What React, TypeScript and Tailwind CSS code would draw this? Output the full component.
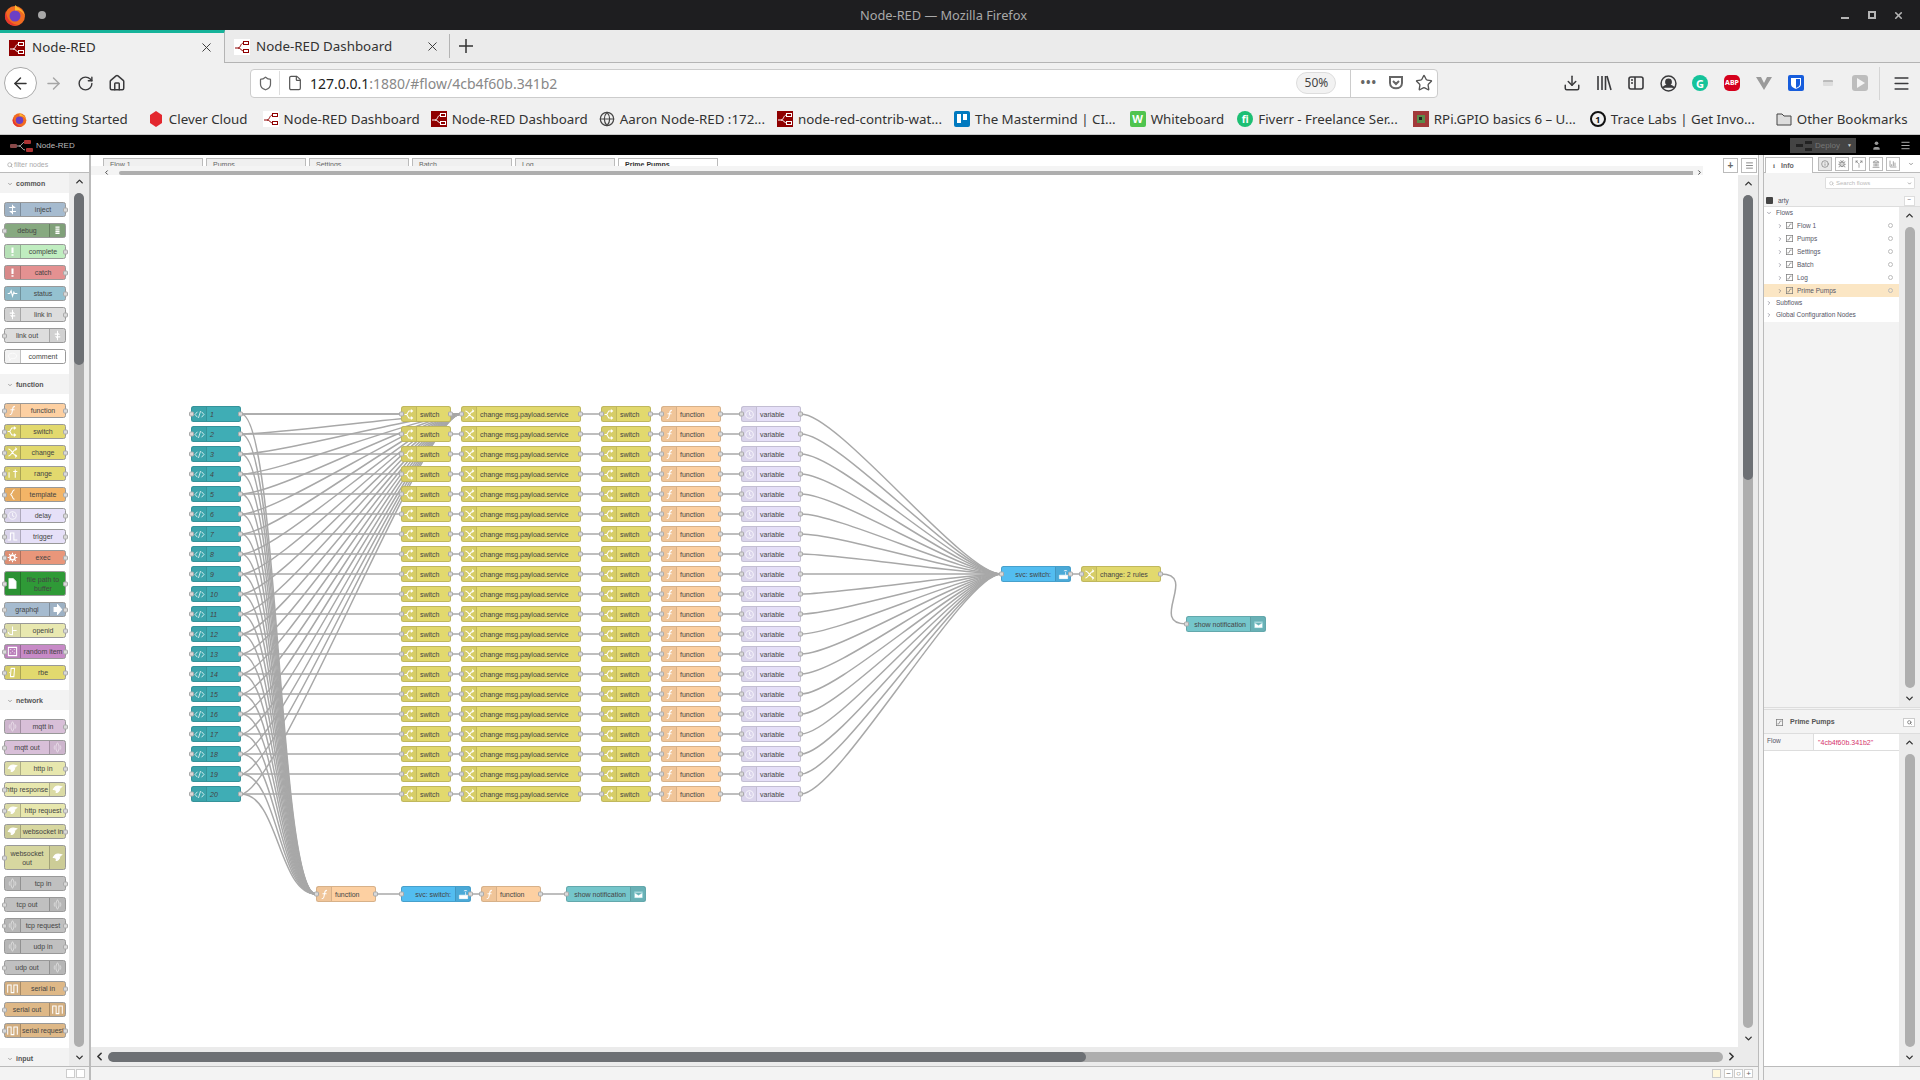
import type { ReactNode } from "react";
import {
  ArrowLeft,
  ArrowRight,
  Bug,
  ChartColumn,
  ChevronDown,
  ChevronLeft,
  ChevronRight,
  ChevronUp,
  Download,
  File,
  Globe,
  House,
  Info,
  Landmark,
  Menu,
  RotateCw,
  Search,
  Shield,
  Split,
  Star,
  User,
  X,
} from "lucide-react";

const ICON_PATHS: Record<string, ReactNode> = {
  switch: <path d="M1 8h3l3-5h5M4 8l3 5h5M10 1l2.500 2L10 5M10 11l2.500 2-2.500 2" fill="none" />,
  change: <path d="M2 3c5 0 7 10 12 10M2 13c5 0 7-10 12-10M12 1l2 2-2 2M12 11l2 2-2 2" fill="none" />,
  function: <path d="M11.500 2c-3 0-3 2-3.500 5l-1 5c-.4 2-1.500 2-3 2M5 7h6" fill="none" />,
  code: <path d="M5 4 1.500 8 5 12M11 4l3.500 4L11 12M9.500 3 6.500 13" fill="none" strokeWidth="1.100" />,
  clock: (
    <g fill="none" opacity="0.75">
      <circle cx="8" cy="8" r="5.500" />
      <path d="M8 4.500V8l2.500 2" />
    </g>
  ),
  mail: <path d="M2 4h12v9H2zM2 5l6 4 6-4" fill="#fff" stroke="#75c6cb" strokeWidth="0.8" />,
  router: <path d="M2 9h12v5H2zM11 9V4M8.500 3c1.500-1 3.500-1 5 0" fill="#fff" stroke="#fff" strokeWidth="1" />,
  inject: <path d="M8 1v14M3 5h8l-2-2M13 11H5l2 2" fill="none" />,
  debug: <path d="M5 3h6M5 6h6M5 9h6M5 12h6" fill="none" strokeWidth="2" />,
  bang: <path d="M8 2v8M8 12v2" fill="none" strokeWidth="3" />,
  status: <path d="M1 8h3l2-4 2 8 2-6 1 2h4" fill="none" />,
  link: <path d="M8 1v14M4 6h6l-2-2M12 10H6l2 2" fill="none" />,
  comment: <path d="M2 7c0-5 12-5 12 0s-7 4-8 4l-2 3v-4C3 10 2 9 2 7z" fill="none" strokeWidth="1" />,
  range: <path d="M3 6v8M3 2v1M12 2v12M9 5h6" fill="none" />,
  template: <path d="M11 1C7 1 9 7 5 8c4 1 2 7 6 7" fill="none" />,
  trigger: <path d="M1 13h4V3h5v10h5" fill="none" />,
  exec: (
    <g fill="none" strokeWidth="2.500">
      <circle cx="8" cy="8" r="3.500" />
      <path d="M8 1v2M8 13v2M1 8h2M13 8h2M3 3l1.500 1.500M13 13l-1.500-1.500M13 3l-1.500 1.500M3 13l1.500-1.500" strokeWidth="1.500" />
    </g>
  ),
  file: <path d="M3 1h6l4 4v10H3z" fill="#fff" />,
  arrow: <path d="M3 5h5V1l6 7-6 7v-4H3z" fill="#fff" />,
  openid: <path d="M8 2v12c-3 0-6-1-6-4M8 8h6" fill="none" />,
  dice: <path d="M2 2h12v12H2zM5 5h1M10 5h1M5 10h1M10 10h1M7.500 7.500h1" fill="none" />,
  rbe: <path d="M6 2h5l-1 12H5zM3 8h1" fill="none" />,
  wave: <path d="M8 1c-3 4-3 10 0 14 3-4 3-10 0-14zM4 5c-1 2-1 4 0 6M12 5c1 2 1 4 0 6" fill="none" strokeWidth="1" opacity="0.7" />,
  cloud: <path d="M2 8c2-5 7-6 12-4-2 1-3 2-3 4s-3 5-5 4c1-2 0-4-4-4z" fill="#fff" />,
  serial: <path d="M1 14V3h5v11h4V3h5v11" fill="none" />,
};

function NodeIcon({ kind }: { kind: string }) {
  return (
    <svg viewBox="0 0 16 16" className="h-[11px] w-[11px]" stroke="#fff" strokeWidth="1.500" fill="#fff">
      {ICON_PATHS[kind]}
    </svg>
  );
}

function Port({ side }: { side: "left" | "right" }) {
  return (
    <span
      className={`absolute top-1/2 h-[5px] w-[5px] -translate-y-1/2 rounded-[1.500px] border border-[#aaa] bg-[#d9d9d9] ${
        side === "left" ? "left-[-3px]" : "right-[-3px]"
      }`}
    />
  );
}

interface FlowNodeProps {
  x: number;
  y: number;
  w: number;
  color: string;
  label: string;
  icon: string;
  right?: boolean;
  italic?: boolean;
}

// page position of the canvas corner; the layout tables below use page pixels
const NODE_TOP = 175;
const NODE_LEFT = 91;

function FlowNode({ x, y, w, color, label, icon, right, italic }: FlowNodeProps) {
  return (
    <div
      className="absolute flex h-[16px] rounded-[2.500px] border border-black/15 text-[7px] leading-[15px] text-[#444]"
      style={{ left: x - NODE_LEFT, top: y - 8 - NODE_TOP, width: w, background: color }}
    >
      {!right && (
        <span className="flex w-[15px] shrink-0 items-center justify-center border-r border-black/10 bg-black/5">
          <NodeIcon kind={icon} />
        </span>
      )}
      <span className={`flex-1 whitespace-nowrap ${right ? "pr-[4px] text-right" : "pl-[3px]"} ${italic ? "italic" : ""}`}>
        {label}
      </span>
      {right && (
        <span className="flex w-[15px] shrink-0 items-center justify-center border-l border-black/10 bg-black/10">
          <NodeIcon kind={icon} />
        </span>
      )}
      <Port side="left" />
      {!right && <Port side="right" />}
      {right && icon === "router" && <Port side="right" />}
    </div>
  );
}

const ROWS = Array.from({ length: 20 }, (_, i) => i);
const rowY = (i: number) => 414 + i * 20;

const COLUMNS = [
  { x: 401, w: 50, color: "#e2d96e", label: "switch", icon: "switch" },
  { x: 461, w: 120, color: "#e2d96e", label: "change msg.payload.service", icon: "change" },
  { x: 601, w: 50, color: "#e2d96e", label: "switch", icon: "switch" },
  { x: 661, w: 60, color: "#fdd0a2", label: "function", icon: "function" },
  { x: 741, w: 60, color: "#e6e0f8", label: "variable", icon: "clock" },
];

function wire(x1: number, y1: number, x2: number, y2: number) {
  const delta = Math.hypot(x2 - x1, y2 - y1);
  const scale = delta < 50 ? 0.75 - 0.75 * ((50 - delta) / 50) : 0.75;
  const c = 50 * scale;
  return `M${x1} ${y1}C${x1 + c} ${y1} ${x2 - c} ${y2} ${x2} ${y2}`;
}

const WIRES: string[] = [
  ...ROWS.flatMap((i) => {
    const y = rowY(i);
    return [
      wire(241, y, 401, y),
      wire(241, y, 461, rowY(0)),
      wire(241, y, 316, 894),
      wire(451, y, 461, y),
      wire(581, y, 601, y),
      wire(651, y, 661, y),
      wire(721, y, 741, y),
      wire(801, y, 1001, 574),
    ];
  }),
  wire(1071, 574, 1081, 574),
  wire(1161, 574, 1186, 624),
  wire(376, 894, 401, 894),
  wire(471, 894, 481, 894),
  wire(541, 894, 566, 894),
];

function Canvas() {
  return (
    <div className="relative flex-1 overflow-hidden bg-white">
      <svg className="absolute left-0 top-0 h-[1080px] w-[1920px]" viewBox={`${NODE_LEFT} ${NODE_TOP} 1920 1080`}>
        {WIRES.map((d, i) => (
          <path key={i} d={d} fill="none" stroke="#a8a8a8" strokeWidth="1.500" />
        ))}
      </svg>
      {ROWS.map((i) => (
        <div key={i}>
          <FlowNode x={191} y={rowY(i)} w={50} color="#3fadb5" label={String(i + 1)} icon="code" italic />
          {COLUMNS.map((c) => (
            <FlowNode key={c.x} {...c} y={rowY(i)} />
          ))}
        </div>
      ))}
      <FlowNode x={1001} y={574} w={70} color="#53bdf0" label="svc: switch:" icon="router" right />
      <FlowNode x={1081} y={574} w={80} color="#e2d96e" label="change: 2 rules" icon="change" />
      <FlowNode x={1186} y={624} w={80} color="#75c6cb" label="show notification" icon="mail" right />
      <FlowNode x={316} y={894} w={60} color="#fdd0a2" label="function" icon="function" />
      <FlowNode x={401} y={894} w={70} color="#53bdf0" label="svc: switch:" icon="router" right />
      <FlowNode x={481} y={894} w={60} color="#fdd0a2" label="function" icon="function" />
      <FlowNode x={566} y={894} w={80} color="#75c6cb" label="show notification" icon="mail" right />
    </div>
  );
}

interface PaletteItem {
  label: string;
  color: string;
  icon: string;
  right?: boolean;
  noIn?: boolean;
  noOut?: boolean;
  tall?: boolean;
}

const PALETTE: { title: string; items: PaletteItem[] }[] = [
  {
    title: "common",
    items: [
      { label: "inject", color: "#a6bbcf", icon: "inject", noIn: true },
      { label: "debug", color: "#87a980", icon: "debug", right: true, noOut: true },
      { label: "complete", color: "#c0edc0", icon: "bang", noIn: true },
      { label: "catch", color: "#e49191", icon: "bang", noIn: true },
      { label: "status", color: "#94c1d0", icon: "status", noIn: true },
      { label: "link in", color: "#dddddd", icon: "link", noIn: true },
      { label: "link out", color: "#dddddd", icon: "link", right: true, noOut: true },
      { label: "comment", color: "#ffffff", icon: "comment", noIn: true, noOut: true },
    ],
  },
  {
    title: "function",
    items: [
      { label: "function", color: "#fdd0a2", icon: "function" },
      { label: "switch", color: "#e2d96e", icon: "switch" },
      { label: "change", color: "#e2d96e", icon: "change" },
      { label: "range", color: "#e2d96e", icon: "range" },
      { label: "template", color: "#f3b567", icon: "template" },
      { label: "delay", color: "#e6e0f8", icon: "clock" },
      { label: "trigger", color: "#e6e0f8", icon: "trigger" },
      { label: "exec", color: "#e9967a", icon: "exec" },
      { label: "file path to buffer", color: "#2f9a37", icon: "file", tall: true },
      { label: "graphql", color: "#a6bbcf", icon: "arrow", right: true },
      { label: "openid", color: "#e8e8b0", icon: "openid" },
      { label: "random item", color: "#c78ac7", icon: "dice" },
      { label: "rbe", color: "#e2d96e", icon: "rbe" },
    ],
  },
  {
    title: "network",
    items: [
      { label: "mqtt in", color: "#d8bfd8", icon: "wave", noIn: true },
      { label: "mqtt out", color: "#d8bfd8", icon: "wave", right: true, noOut: true },
      { label: "http in", color: "#e7e7ae", icon: "cloud", noIn: true },
      { label: "http response", color: "#e7e7ae", icon: "cloud", right: true, noOut: true },
      { label: "http request", color: "#e7e7ae", icon: "cloud" },
      { label: "websocket in", color: "#d7d7a0", icon: "cloud", noIn: true },
      { label: "websocket out", color: "#d7d7a0", icon: "cloud", right: true, noOut: true, tall: true },
      { label: "tcp in", color: "#c0c0c0", icon: "wave", noIn: true },
      { label: "tcp out", color: "#c0c0c0", icon: "wave", right: true, noOut: true },
      { label: "tcp request", color: "#c0c0c0", icon: "wave" },
      { label: "udp in", color: "#c0c0c0", icon: "wave", noIn: true },
      { label: "udp out", color: "#c0c0c0", icon: "wave", right: true, noOut: true },
      { label: "serial in", color: "#deb887", icon: "serial", noIn: true },
      { label: "serial out", color: "#deb887", icon: "serial", right: true, noOut: true },
      { label: "serial request", color: "#deb887", icon: "serial" },
    ],
  },
];

function PaletteNode({ item }: { item: PaletteItem }) {
  const icon = (
    <span
      className={`flex w-[16px] shrink-0 items-center justify-center bg-black/5 ${
        item.right ? "border-l border-black/20" : "border-r border-black/20"
      }`}
    >
      <NodeIcon kind={item.icon} />
    </span>
  );
  return (
    <div
      className={`relative ml-[4px] flex w-[62px] rounded-[2.500px] border border-[#999] text-[7px] text-[#444] ${
        item.tall ? "h-[25px] leading-[9px]" : "h-[15px] leading-[13px]"
      }`}
      style={{ background: item.color }}
    >
      {!item.right && icon}
      <span className={`flex flex-1 items-center justify-center text-center ${item.tall ? "" : "whitespace-nowrap"}`}>
        {item.label}
      </span>
      {item.right && icon}
      {!item.noIn && <Port side="left" />}
      {!item.noOut && <Port side="right" />}
    </div>
  );
}

function VScroll({ className, dark }: { className: string; dark?: string }) {
  return (
    <div className={`flex w-[20px] shrink-0 flex-col items-center bg-[#ebebeb] ${className}`}>
      <ChevronUp size={11} strokeWidth={3} className="my-[3px] shrink-0 text-[#333]" />
      <div className="mt-[3px] w-[10px] flex-1 overflow-hidden rounded-full bg-[#aeaeae]">
        {dark && <div className={`rounded-full bg-[#6d7074] ${dark}`} />}
      </div>
      <ChevronDown size={11} strokeWidth={3} className="mb-[3px] mt-[5px] shrink-0 text-[#333]" />
    </div>
  );
}

function PaletteHeader({ title }: { title: string }) {
  return (
    <div className="flex h-[20px] items-center gap-[3px] bg-[#f3f3f3] pl-[7px] pt-[2px] text-[7px] font-bold text-[#555]">
      <ChevronDown size={6} strokeWidth={2} />
      {title}
    </div>
  );
}

function Palette() {
  return (
    <div className="flex w-[89px] shrink-0 flex-col">
      <div className="flex h-[18px] shrink-0 items-center gap-[1px] border-b border-[#bbb] pl-[7px] pt-[3px] text-[7px] text-[#aaa]">
        <Search size={6} strokeWidth={3} />
        filter nodes
      </div>
      <div className="flex min-h-0 flex-1">
        <div className="w-[69px] overflow-hidden">
          {PALETTE.map((section) => (
            <div key={section.title}>
              <PaletteHeader title={section.title} />
              <div className="flex flex-col gap-[6px] pb-[10px] pt-[9px]">
                {section.items.map((item) => (
                  <PaletteNode key={item.label} item={item} />
                ))}
              </div>
            </div>
          ))}
          <PaletteHeader title="input" />
        </div>
        <VScroll className="h-full" dark="h-[172px]" />
      </div>
      <div className="flex h-[14px] shrink-0 items-center justify-end gap-[1px] border-t border-[#bbb] bg-[#f3f3f3] pr-[4px]">
        <span className="h-[9px] w-[9px] border border-[#ccc] bg-white" />
        <span className="h-[9px] w-[9px] border border-[#ccc] bg-white" />
      </div>
    </div>
  );
}

const FLOW_TABS = ["Flow 1", "Pumps", "Settings", "Batch", "Log", "Prime Pumps"];

function Workspace() {
  return (
    <div className="relative flex min-w-0 flex-1 flex-col">
      <div className="flex h-[11px] shrink-0 gap-[3px] overflow-hidden bg-white pl-[12px] pt-[3px]">
        {FLOW_TABS.map((tab, i) => (
          <div
            key={tab}
            className={`h-[16px] w-[100px] shrink-0 border border-[#bbb] pl-[6px] text-[7px] leading-[12px] ${
              i === 5 ? "bg-white font-bold text-[#333]" : "bg-[#f0f0f0] text-[#666]"
            }`}
          >
            {tab}
          </div>
        ))}
      </div>
      <div className="flex h-[9px] w-[1612px] shrink-0 items-end bg-[#f4f4f4] pl-[12px]">
        <ChevronLeft size={7} strokeWidth={3} className="mb-[-1px] text-[#333]" />
        <div className="ml-[9px] mr-[3px] h-[4px] flex-1 rounded-l-full bg-[#aeaeae]" />
        <ChevronRight size={7} strokeWidth={3} className="mb-[-1px] text-[#333]" />
      </div>
      <div className="flex min-h-0 flex-1">
        <Canvas />
        <VScroll className="" dark="h-[285px]" />
      </div>
      <div className="flex h-[19px] shrink-0 items-center gap-[2px] bg-[#ebebeb] pl-[2px] pr-[20px]">
        <ChevronLeft size={13} strokeWidth={3} className="text-[#333]" />
        <div className="h-[10px] flex-1 overflow-hidden rounded-full bg-[#aeaeae]">
          <div className="h-[10px] w-[978px] rounded-full bg-[#6d7074]" />
        </div>
        <ChevronRight size={13} strokeWidth={3} className="text-[#333]" />
      </div>
      <div className="flex h-[14px] shrink-0 items-center justify-end gap-[1px] border-t border-[#bbb] bg-[#f3f3f3] pr-[5px] text-[8px] leading-none text-[#666]">
        <span className="mr-[2px] h-[9px] w-[9px] border border-[#ccc] bg-[#fff8dd]" />
        <span className="flex h-[9px] w-[9px] items-center justify-center border border-[#ccc] bg-white">−</span>
        <span className="flex h-[9px] w-[9px] items-center justify-center border border-[#ccc] bg-white">○</span>
        <span className="flex h-[9px] w-[9px] items-center justify-center border border-[#ccc] bg-white">+</span>
      </div>
      {/* tab bar buttons sit over the clipped tab strip */}
      <div className="absolute right-0 top-[3px] flex gap-[3px] pr-[1px]">
        <span className="flex h-[15px] w-[15px] items-center justify-center border border-[#bbb] bg-white text-[10px] font-bold leading-none text-[#666]">+</span>
        <span className="flex h-[15px] w-[16px] items-center justify-center border border-[#bbb] bg-white">
          <Menu size={9} strokeWidth={2} className="text-[#666]" />
        </span>
      </div>
    </div>
  );
}

function FlowGlyph() {
  return (
    <svg viewBox="0 0 10 10" className="h-[7px] w-[7px] shrink-0" fill="none" stroke="#777" strokeWidth="1">
      <rect x="0.500" y="0.500" width="9" height="9" />
      <path d="M2 7h2M6 3h2M4 7l2-4" />
    </svg>
  );
}

function InfoTree() {
  return (
    <div className="min-w-0 flex-1 bg-[#f3f3f3] text-[6.500px] text-[#556]">
      <div className="bg-white pb-[1px]">
        <div className="flex h-[12px] items-center gap-[4px] pl-[2px]">
          <ChevronDown size={6} strokeWidth={2} />
          Flows
        </div>
        {FLOW_TABS.map((flow, i) => (
          <div
            key={flow}
            className={`flex h-[13px] items-center pl-[13px] pr-[6px] ${i === 5 ? "bg-[#fbe6c4]" : ""}`}
          >
            <ChevronRight size={6} strokeWidth={2} className="mr-[3px] shrink-0" />
            <FlowGlyph />
            <span className="ml-[4px] flex-1">{flow}</span>
            <span className="h-[5px] w-[5px] rounded-full border border-[#bbb]" />
          </div>
        ))}
        <div className="flex h-[12px] items-center gap-[4px] pl-[2px]">
          <ChevronRight size={6} strokeWidth={2} />
          Subflows
        </div>
        <div className="flex h-[12px] items-center gap-[4px] pl-[2px]">
          <ChevronRight size={6} strokeWidth={2} />
          Global Configuration Nodes
        </div>
      </div>
    </div>
  );
}

const SIDEBAR_TABS = [Info, Bug, Split, Landmark, ChartColumn];

function Sidebar() {
  return (
    <div className="flex w-[156px] shrink-0 flex-col text-[7px]">
      <div className="flex h-[18px] shrink-0 items-end gap-[3px] border-b border-[#bbb] pl-[1px]">
        <div className="mb-[-1px] flex h-[16px] w-[48px] items-center gap-[6px] border border-b-0 border-[#bbb] bg-white pl-[7px] pt-[1px] font-bold text-[#666]">
          <span className="font-['Liberation_Serif',serif]">i</span>
          Info
        </div>
        <div className="mb-[1px] ml-[2px] flex gap-[3px]">
          {SIDEBAR_TABS.map((Icon, i) => (
            <span
              key={i}
              className={`flex h-[14px] w-[14px] items-center justify-center border border-[#bbb] text-[#777] ${
                i === 0 ? "bg-[#e8e8e8]" : "bg-white"
              }`}
            >
              <Icon size={8} strokeWidth={2} />
            </span>
          ))}
        </div>
        <ChevronDown size={6} strokeWidth={3} className="mb-[5px] ml-[5px] text-[#777]" />
      </div>
      <div className="flex h-[20px] shrink-0 items-center justify-end bg-[#f3f3f3] pr-[5px]">
        <div className="flex h-[12px] w-[90px] items-center gap-[2px] rounded-[1px] border border-[#ddd] bg-white pl-[3px] text-[6px] text-[#bbb]">
          <Search size={5} strokeWidth={3} />
          <span className="flex-1">Search flows</span>
          <ChevronDown size={5} strokeWidth={3} className="mr-[2px] text-[#777]" />
        </div>
      </div>
      <div className="flex h-[14px] shrink-0 items-center border-b border-[#ddd] bg-[#f3f3f3] pl-[2px] pr-[5px] pt-[2px] text-[6.500px] text-[#556]">
        <span className="mr-[5px] h-[7px] w-[7px] rounded-[1px] bg-[#444]" />
        <span className="flex-1">arty</span>
        <span className="flex h-[10px] w-[11px] items-center justify-center border border-[#ddd] bg-white leading-none">−</span>
      </div>
      <div className="flex h-[500px] shrink-0">
        <InfoTree />
        <VScroll className="w-[21px]" />
      </div>
      <div className="h-[3px] shrink-0 border-y border-[#ddd] bg-[#f3f3f3]" />
      <div className="flex h-[24px] shrink-0 items-center border-b border-[#ddd] bg-[#f3f3f3] pl-[12px] pr-[5px] pt-[1px] text-[7px] font-bold text-[#555]">
        <FlowGlyph />
        <span className="ml-[7px] flex-1">Prime Pumps</span>
        <span className="flex h-[9px] w-[12px] items-center justify-center border border-[#ccc] bg-white">
          <Search size={5} strokeWidth={3} />
        </span>
      </div>
      <div className="flex min-h-0 flex-1">
        <div className="min-w-0 flex-1 bg-white">
          <div className="flex h-[17px] border-b border-[#ddd]">
            <span className="w-[50px] border-r border-[#ddd] bg-[#f6f6f6] pl-[3px] pt-[2px] text-[6.500px] text-[#556]">Flow</span>
            <span className="pl-[4px] pt-[4px] text-[#d6336c]">"4cb4f60b.341b2"</span>
          </div>
        </div>
        <VScroll className="w-[21px]" />
      </div>
      <div className="h-[14px] shrink-0 border-t border-[#bbb] bg-[#f3f3f3]" />
    </div>
  );
}

function NodeRedMark({ className }: { className: string }) {
  return (
    <svg viewBox="0 0 16 16" className={className}>
      <rect width="16" height="16" fill="#8f0000" />
      <path d="M1 9h3c3 0 2-5 6-5M4 9c3 0 3 3 6 3" fill="none" stroke="#fff" strokeWidth="1" />
      <rect x="9.500" y="2.500" width="5" height="3" fill="none" stroke="#fff" strokeWidth="1" />
      <rect x="9.500" y="10.500" width="5" height="3" fill="none" stroke="#fff" strokeWidth="1" />
    </svg>
  );
}

function NodeRedLight({ className }: { className: string }) {
  return (
    <svg viewBox="0 0 16 16" className={className}>
      <rect width="16" height="16" fill="#fff" />
      <path d="M1 9h3c3 0 2-5 6-5M4 9c3 0 3 3 6 3" fill="none" stroke="#8f0000" strokeWidth="1" />
      <rect x="9.500" y="2.500" width="5" height="3" fill="none" stroke="#8f0000" strokeWidth="1" />
      <rect x="9.500" y="10.500" width="5" height="3" fill="none" stroke="#8f0000" strokeWidth="1" />
    </svg>
  );
}

function FirefoxLogo({ className }: { className: string }) {
  return (
    <svg viewBox="0 0 22 22" className={className}>
      <circle cx="11" cy="12" r="10" fill="#f26b21" />
      <path d="M11 1c3 3 9 5 10 11-2-4-6-7-10-5z" fill="#ffb52e" />
      <circle cx="11" cy="12" r="5.500" fill="#6c3fc5" />
      <path d="M2 7c0 8 6 14 13 14-8 3-15-3-14-10z" fill="#e8392d" />
    </svg>
  );
}

function TitleBar() {
  return (
    <div className="relative flex h-[30px] shrink-0 items-center bg-[#1e1e20] pl-[4px]">
      <FirefoxLogo className="h-[22px] w-[22px]" />
      <span className="ml-[12px] h-[8px] w-[8px] rounded-full bg-[#a8a8a8]" />
      <span className="flex-1 pt-[1px] text-center text-[12.800px] text-[#a9a9a9]">Node-RED — Mozilla Firefox</span>
      <div className="flex items-center pr-[16px] text-[#b5b5b5]">
        <span className="mt-[5px] h-[2px] w-[8px] bg-[#b5b5b5]" />
        <span className="ml-[19px] h-[8px] w-[8px] border-2 border-[#b5b5b5]" />
        <X size={11} strokeWidth={3.500} className="ml-[17px]" />
      </div>
    </div>
  );
}

function TabStrip() {
  return (
    <div className="flex h-[33px] shrink-0 items-stretch border-b border-[#b4b4b4] bg-[#ebebeb] text-[13.330px] text-[#333]">
      <div className="mb-[-1px] flex w-[225px] items-center border-r border-t-[3px] border-r-[#b4b4b4] border-t-[#16b39a] bg-[#f0f0f0] pb-[1px] pl-[9px] pr-[10px]">
        <NodeRedMark className="h-[16px] w-[16px]" />
        <span className="ml-[7px] flex-1">Node-RED</span>
        <X size={15} strokeWidth={1.500} />
      </div>
      <div className="my-[4px] flex w-[225px] items-center border-r border-[#b4b4b4] pl-[9px] pr-[9px] pt-[1px]">
        <NodeRedLight className="h-[16px] w-[16px]" />
        <span className="ml-[6px] flex-1">Node-RED Dashboard</span>
        <X size={15} strokeWidth={1.500} />
      </div>
      <svg viewBox="0 0 16 16" className="ml-[8px] mt-[8px] h-[16px] w-[16px]" fill="none" stroke="#333" strokeWidth="1.500">
        <path d="M8 1v14M1 8h14" />
      </svg>
    </div>
  );
}

function Slot({ children }: { children: ReactNode }) {
  return <span className="flex h-[32px] w-[32px] shrink-0 items-center justify-center text-[#3a3a3c]">{children}</span>;
}

function NavBar() {
  return (
    <div className="flex h-[41px] shrink-0 items-center bg-[#f0f0f0] pb-[1px] pl-[4px]">
      <span className="flex h-[32px] w-[33px] shrink-0 items-center justify-center rounded-full border border-[#aaa] bg-white">
        <ArrowLeft size={19} strokeWidth={1.800} className="text-[#333]" />
      </span>
      <Slot>
        <ArrowRight size={19} strokeWidth={1.800} className="text-[#a5a5a5]" />
      </Slot>
      <Slot>
        <RotateCw size={17} strokeWidth={2} />
      </Slot>
      <Slot>
        <House size={18} strokeWidth={2} />
      </Slot>
      <div className="ml-[117px] flex h-[29px] w-[1188px] items-center rounded-[4px] border border-[#ccc] bg-white pr-[4px] text-[#888]">
        <Shield size={15} strokeWidth={2} className="ml-[7px] text-[#666]" />
        <span className="ml-[6px] h-[24px] w-[1px] bg-[#ddd]" />
        <File size={16} strokeWidth={1.800} className="ml-[7px] text-[#555]" />
        <span className="ml-[7px] flex-1 text-[14px]">
          <span className="text-[#222]">127.0.0.1</span>:1880/#flow/4cb4f60b.341b2
        </span>
        <span className="flex h-[22px] w-[40px] items-center justify-center rounded-full border border-[#ddd] bg-[#f2f2f2] text-[12px] text-[#444]">50%</span>
        <span className="ml-[14px] h-[28px] w-[1px] bg-[#ccc]" />
        <span className="ml-[9px] text-[12px] font-bold leading-none tracking-[1px] text-[#666]">•••</span>
        <svg viewBox="0 0 16 16" className="ml-[11px] h-[16px] w-[16px]" fill="none" stroke="#666" strokeWidth="2">
          <path d="M2 2h12v6c0 7-12 7-12 0zM5 6l3 3 3-3" />
        </svg>
        <Star size={18} strokeWidth={1.800} className="ml-[11px] text-[#555]" />
      </div>
      <div className="ml-[118px] flex items-center">
        <Slot>
          <Download size={18} strokeWidth={2} />
        </Slot>
        <Slot>
          <svg viewBox="0 0 16 16" className="h-[16px] w-[16px]" fill="none" stroke="currentColor" strokeWidth="1.600">
            <path d="M2 1v14M6 1v14M9.500 1v14M11 1l4 14" />
          </svg>
        </Slot>
        <Slot>
          <svg viewBox="0 0 16 16" className="h-[16px] w-[16px]" fill="none" stroke="currentColor" strokeWidth="1.600">
            <rect x="1" y="2" width="14" height="12" rx="2" />
            <path d="M7 2v12M3 5h2M3 8h2" />
          </svg>
        </Slot>
        <Slot>
          <svg viewBox="0 0 16 16" className="h-[17px] w-[17px]" fill="none" stroke="currentColor" strokeWidth="1.400">
            <circle cx="8" cy="8" r="7" />
            <circle cx="8" cy="6.500" r="2.500" fill="currentColor" />
            <path d="M3 12c2-3 8-3 10 0" fill="currentColor" />
          </svg>
        </Slot>
        <Slot>
          <span className="flex h-[16px] w-[16px] items-center justify-center rounded-full bg-[#15c39a] text-[11px] font-bold leading-none text-white">G</span>
        </Slot>
        <Slot>
          <span className="flex h-[16px] w-[16px] items-center justify-center rounded-[5px] bg-[#d5001c] text-[7px] font-bold text-white">ABP</span>
        </Slot>
        <Slot>
          <svg viewBox="0 0 16 16" className="h-[16px] w-[16px]">
            <path d="M0 2h5l3 6 3-6h5L8 15z" fill="#9a9a9a" />
          </svg>
        </Slot>
        <Slot>
          <svg viewBox="0 0 16 16" className="h-[16px] w-[16px]">
            <rect width="16" height="16" rx="2" fill="#175ddc" />
            <path d="M3 3h10v6c0 3-3 4-5 5-2-1-5-2-5-5z" fill="#fff" />
            <path d="M8 4h4v5c0 2-2 3-4 4z" fill="#175ddc" />
          </svg>
        </Slot>
        <Slot>
          <span className="h-[6px] w-[10px] rounded-[1px] border-t-2 border-[#bbb] bg-[#ddd]" />
        </Slot>
        <Slot>
          <svg viewBox="0 0 16 16" className="h-[16px] w-[16px]">
            <rect width="16" height="16" rx="3" fill="#bdbdbd" />
            <path d="M5 3l8 5-8 5z" fill="#f4f4f4" />
          </svg>
        </Slot>
        <span className="ml-[3px] h-[33px] w-[1px] bg-[#d5d5d5]" />
        <Slot>
          <Menu size={19} strokeWidth={2} className="ml-[11px]" />
        </Slot>
      </div>
    </div>
  );
}

const BOOKMARKS: { label: string; icon: ReactNode; gap: string }[] = [
  { label: "Getting Started", icon: <FirefoxLogo className="h-[15px] w-[15px]" />, gap: "ml-[12px]" },
  {
    label: "Clever Cloud",
    icon: (
      <svg viewBox="0 0 16 16" className="h-[16px] w-[16px]">
        <path d="M8 0l6 4v8l-6 4-6-4V4z" fill="#e3272e" />
      </svg>
    ),
    gap: "ml-[20px]",
  },
  { label: "Node-RED Dashboard", icon: <NodeRedLight className="h-[16px] w-[16px]" />, gap: "ml-[15px]" },
  { label: "Node-RED Dashboard", icon: <NodeRedMark className="h-[16px] w-[16px]" />, gap: "ml-[11px]" },
  { label: "Aaron Node-RED :172...", icon: <Globe size={16} strokeWidth={1.800} className="text-[#444]" />, gap: "ml-[11px]" },
  { label: "node-red-contrib-wat...", icon: <NodeRedMark className="h-[16px] w-[16px]" />, gap: "ml-[12px]" },
  {
    label: "The Mastermind | CI...",
    icon: (
      <svg viewBox="0 0 16 16" className="h-[16px] w-[16px]">
        <rect width="16" height="16" rx="2" fill="#0079bf" />
        <rect x="3" y="3" width="4" height="9" fill="#fff" />
        <rect x="9" y="3" width="4" height="6" fill="#fff" />
      </svg>
    ),
    gap: "ml-[12px]",
  },
  {
    label: "Whiteboard",
    icon: <span className="flex h-[16px] w-[16px] items-center justify-center rounded-[2px] bg-[#4fc44f] text-[11px] font-bold text-white">W</span>,
    gap: "ml-[14px]",
  },
  {
    label: "Fiverr - Freelance Ser...",
    icon: <span className="flex h-[16px] w-[16px] items-center justify-center rounded-full bg-[#1dbf73] text-[10px] font-bold text-white">fi</span>,
    gap: "ml-[13px]",
  },
  {
    label: "RPi.GPIO basics 6 – U...",
    icon: (
      <svg viewBox="0 0 16 16" className="h-[16px] w-[16px]">
        <rect width="16" height="16" fill="#a23a3a" />
        <rect x="4" y="4" width="8" height="8" fill="#5b8c4a" />
        <rect x="6" y="6" width="3" height="3" fill="#222" />
      </svg>
    ),
    gap: "ml-[15px]",
  },
  {
    label: "Trace Labs | Get Invo...",
    icon: (
      <span className="flex h-[16px] w-[16px] items-center justify-center rounded-full border-2 border-[#111] text-[9px] font-bold leading-none text-[#111]">1</span>
    ),
    gap: "ml-[14px]",
  },
  {
    label: "Other Bookmarks",
    icon: (
      <svg viewBox="0 0 16 16" className="h-[16px] w-[16px]" fill="#ddd" stroke="#444" strokeWidth="1">
        <path d="M1 3h5l2 2h7v9H1z" />
      </svg>
    ),
    gap: "ml-[21px]",
  },
];

function BookmarksBar() {
  return (
    <div className="flex h-[31px] shrink-0 items-center border-b border-[#c8c8c8] bg-[#f0f0f0] pt-[1px] text-[13.330px] text-[#333]">
      {BOOKMARKS.map((b, i) => (
        <div key={i} className={`flex shrink-0 items-center gap-[5px] whitespace-nowrap ${b.gap}`}>
          {b.icon}
          {b.label}
        </div>
      ))}
    </div>
  );
}

function EditorHeader() {
  return (
    <div className="flex h-[20px] shrink-0 items-center bg-black pt-[1px] font-['Liberation_Sans',sans-serif] text-[8px] text-[#bbb]">
      <svg viewBox="0 0 24 12" className="ml-[9px] h-[12px] w-[24px]">
        <path d="M8 6h2c3 0 3-4 6-4M10 6c3 0 3 4 6 4" fill="none" stroke="#aaa" strokeWidth="1" />
        <rect x="1" y="4" width="7" height="4" rx="1" fill="#8a4a4a" />
        <rect x="15" y="0" width="7" height="4" rx="1" fill="#a33" />
        <rect x="17" y="8" width="7" height="4" rx="1" fill="#a33" />
      </svg>
      <span className="ml-[3px] flex-1">Node-RED</span>
      <div className="flex h-[15px] w-[66px] items-center bg-[#444] pl-[6px] text-[#777]">
        <svg viewBox="0 0 16 10" className="h-[10px] w-[16px]" fill="#222">
          <rect y="3" width="7" height="3" />
          <rect x="9" width="7" height="3" />
          <rect x="9" y="7" width="7" height="3" />
        </svg>
        <span className="ml-[3px] flex-1">Deploy</span>
        <span className="mr-[4px] text-[5px] text-[#ccc]">▼</span>
      </div>
      <User size={11} fill="#999" strokeWidth={0} className="ml-[15px]" />
      <Menu size={11} strokeWidth={2} className="ml-[18px] mr-[9px] text-[#bbb]" />
    </div>
  );
}

export default function App() {
  return (
    <div className="flex h-[1080px] w-[1920px] flex-col overflow-hidden bg-white font-['Noto_Sans',sans-serif]">
      <TitleBar />
      <TabStrip />
      <NavBar />
      <BookmarksBar />
      <EditorHeader />
      <div className="flex min-h-0 flex-1 font-['Liberation_Sans',sans-serif]">
        <Palette />
        <div className="w-[2px] shrink-0 bg-[#bbb]" />
        <Workspace />
        <div className="w-[6px] shrink-0 border-x border-[#bbb] bg-[#f3f3f3]" />
        <Sidebar />
      </div>
    </div>
  );
}
